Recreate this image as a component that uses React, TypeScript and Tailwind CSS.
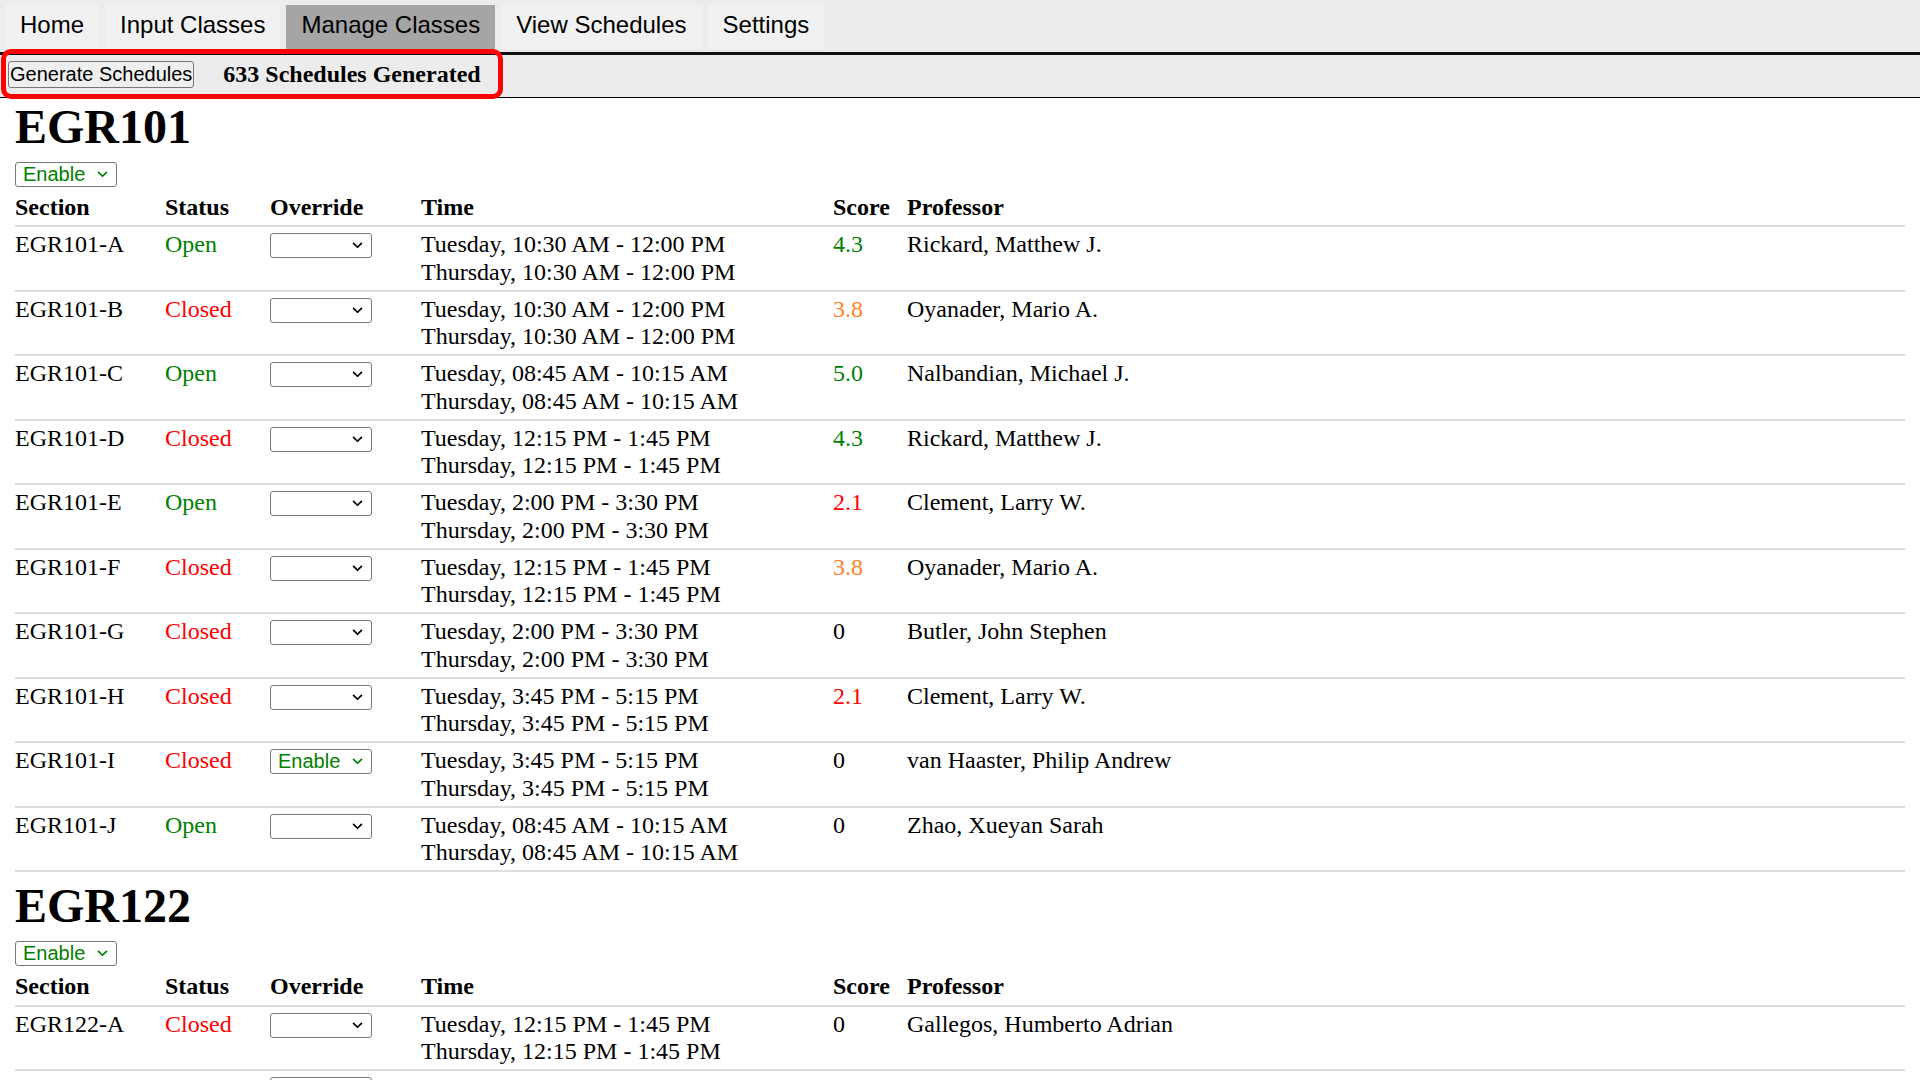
import React from "react";

type Row = {
  section: string;
  open: boolean;
  override: string;
  time: string;
  score: string;
  professor: string;
};

const SCORE_COLORS: Record<string, string> = {
  "5.0": "text-[#008000]",
  "4.3": "text-[#008000]",
  "3.8": "text-[#ff7f27]",
  "2.1": "text-[#ff0000]",
  "0": "text-black",
};

const EGR101: Row[] = [
  { section: "EGR101-A", open: true, override: "", time: "10:30 AM - 12:00 PM", score: "4.3", professor: "Rickard, Matthew J." },
  { section: "EGR101-B", open: false, override: "", time: "10:30 AM - 12:00 PM", score: "3.8", professor: "Oyanader, Mario A." },
  { section: "EGR101-C", open: true, override: "", time: "08:45 AM - 10:15 AM", score: "5.0", professor: "Nalbandian, Michael J." },
  { section: "EGR101-D", open: false, override: "", time: "12:15 PM - 1:45 PM", score: "4.3", professor: "Rickard, Matthew J." },
  { section: "EGR101-E", open: true, override: "", time: "2:00 PM - 3:30 PM", score: "2.1", professor: "Clement, Larry W." },
  { section: "EGR101-F", open: false, override: "", time: "12:15 PM - 1:45 PM", score: "3.8", professor: "Oyanader, Mario A." },
  { section: "EGR101-G", open: false, override: "", time: "2:00 PM - 3:30 PM", score: "0", professor: "Butler, John Stephen" },
  { section: "EGR101-H", open: false, override: "", time: "3:45 PM - 5:15 PM", score: "2.1", professor: "Clement, Larry W." },
  { section: "EGR101-I", open: false, override: "Enable", time: "3:45 PM - 5:15 PM", score: "0", professor: "van Haaster, Philip Andrew" },
  { section: "EGR101-J", open: true, override: "", time: "08:45 AM - 10:15 AM", score: "0", professor: "Zhao, Xueyan Sarah" },
];

const EGR122: Row[] = [
  { section: "EGR122-A", open: false, override: "", time: "12:15 PM - 1:45 PM", score: "0", professor: "Gallegos, Humberto Adrian" },
];

const TABS = ["Home", "Input Classes", "Manage Classes", "View Schedules", "Settings"];

function OptionSelect({ value, className = "" }: { value: string; className?: string }) {
  const enabled = value === "Enable";
  return (
    <div className={`relative w-[102px] h-[25px] ${className}`}>
      <select
        defaultValue={value}
        className={`appearance-none block w-full h-full border border-[#767676] rounded-[3px] bg-white pl-[7px] text-[20px] leading-[23px] font-['Liberation_Sans',Arial,sans-serif] ${enabled ? "text-[#008000]" : "text-black"}`}
      >
        <option value=""></option>
        <option value="Enable">Enable</option>
        <option value="Disable">Disable</option>
      </select>
      <svg
        viewBox="0 0 12 8"
        className={`pointer-events-none absolute right-[9px] top-[9px] w-[11px] h-[7px] ${enabled ? "text-[#008000]" : "text-black"}`}
        fill="none"
        stroke="currentColor"
        strokeWidth="2"
        strokeLinecap="round"
        strokeLinejoin="round"
      >
        <path d="M1.5 1.5 L6 6 L10.5 1.5" />
      </svg>
    </div>
  );
}

function CourseTable({ name, rows, trailing = false }: { name: string; rows: Row[]; trailing?: boolean }) {
  const cell = "pt-[4px] pb-[4px] border-b-2 border-[#dddddd]";
  return (
    <section>
      <h1 className="text-[48px] leading-[55px] font-bold">{name}</h1>
      <OptionSelect value="Enable" className="mt-[8px]" />
      <table className="mt-[3px] w-full table-fixed border-collapse text-[24px] leading-[27.25px]">
        <thead>
          <tr className="text-left">
            <th className={`w-[150px] font-bold ${cell}`}>Section</th>
            <th className={`w-[105px] font-bold ${cell}`}>Status</th>
            <th className={`w-[151px] font-bold ${cell}`}>Override</th>
            <th className={`w-[412px] font-bold ${cell}`}>Time</th>
            <th className={`w-[74px] font-bold ${cell}`}>Score</th>
            <th className={`font-bold ${cell}`}>Professor</th>
          </tr>
        </thead>
        <tbody>
          {rows.map((row) => (
            <tr key={row.section} className="align-top">
              <td className={cell}>{row.section}</td>
              <td className={`${cell} ${row.open ? "text-[#008000]" : "text-[#ff0000]"}`}>
                {row.open ? "Open" : "Closed"}
              </td>
              <td className={cell}>
                <OptionSelect value={row.override} className="mt-[2px]" />
              </td>
              <td className={cell}>
                <div>Tuesday, {row.time}</div>
                <div>Thursday, {row.time}</div>
              </td>
              <td className={`${cell} ${SCORE_COLORS[row.score]}`}>{row.score}</td>
              <td className={cell}>{row.professor}</td>
            </tr>
          ))}
          {trailing && (
            <tr className="align-top">
              <td className="pt-[4px]" />
              <td className="pt-[4px]" />
              <td className="pt-[4px]">
                <OptionSelect value="" className="mt-[2px]" />
              </td>
              <td className="pt-[4px]" />
              <td className="pt-[4px]" />
              <td className="pt-[4px]" />
            </tr>
          )}
        </tbody>
      </table>
    </section>
  );
}

export default function App() {
  return (
    <div className="relative h-[1080px] overflow-hidden bg-white text-black font-['Liberation_Serif','Times_New_Roman',serif]">
      <nav className="flex items-start gap-[6px] h-[55px] pt-[5px] pl-[5px] bg-[#ececec] border-b-[3px] border-[#111111] font-['Liberation_Sans',Arial,sans-serif] text-[24px] leading-[27.6px]">
        {TABS.map((tab) => (
          <a
            key={tab}
            href="#"
            className={`h-[44px] px-[15px] pt-[6px] text-black ${tab === "Manage Classes" ? "bg-[#a5a5a5]" : "bg-[#f1f1f1]"}`}
          >
            {tab}
          </a>
        ))}
      </nav>

      <div className="flex items-center h-[43px] pb-[4px] pl-[8px] bg-[#ececec] border-b border-black">
        <button className="px-px py-px border border-[#767676] rounded-[3px] bg-[#efefef] text-[20px] leading-[23px] font-['Liberation_Sans',Arial,sans-serif]">
          Generate Schedules
        </button>
        <span className="ml-[29px] text-[24px] font-bold">633 Schedules Generated</span>
      </div>

      {/* red highlight drawn over the toolbar */}
      <div className="absolute left-[1px] top-[49px] w-[502px] h-[50px] border-[5px] border-[#ff0000] rounded-[10px]" />

      <main className="flex flex-col gap-[6px] pt-[1px] px-[15px]">
        <CourseTable name="EGR101" rows={EGR101} />
        <CourseTable name="EGR122" rows={EGR122} trailing />
      </main>
    </div>
  );
}
